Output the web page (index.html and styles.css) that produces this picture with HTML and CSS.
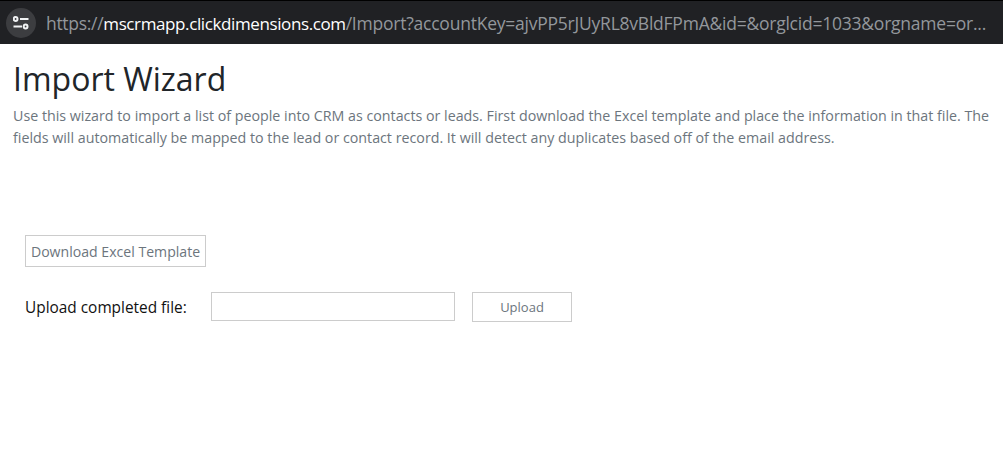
FILE: index.html
```html
<!DOCTYPE html>
<html lang="en">
<head>
<meta charset="utf-8">
<title>Import Wizard</title>
<link rel="stylesheet" href="styles.css">
</head>
<body>
<header class="addressbar">
  <span class="site-btn">
    <svg width="16" height="14" viewBox="0 0 16 14" aria-hidden="true">
      <circle cx="2.6" cy="3" r="1.9" fill="none" stroke="#f1f3f4" stroke-width="2"/>
      <path d="M7 3h8.5M0.5 10.5h8.5" stroke="#f1f3f4" stroke-width="2" fill="none"/>
      <circle cx="12.6" cy="10.5" r="1.9" fill="none" stroke="#f1f3f4" stroke-width="2"/>
    </svg>
  </span>
  <span class="url"><span class="dim">https://</span><span class="host">mscrmapp.clickdimensions.com</span><span class="dim tail">/Import?accountKey=ajvPP5rJUyRL8vBldFPmA&amp;id=&amp;orglcid=1033&amp;orgname=or...</span></span>
</header>
<main class="page">
  <h1 class="title">Import Wizard</h1>
  <p class="intro">Use this wizard to import a list of people into CRM as contacts or leads. First download the Excel template and place the information in that file. The fields will automatically be mapped to the lead or contact record. It will detect any duplicates based off of the email address.</p>
  <section class="actions">
    <button class="download" type="button">Download Excel Template</button>
    <div class="upload-row">
      <label class="upload-label" for="file">Upload completed file:</label>
      <input class="file-input" id="file" type="text">
      <button class="upload" type="button">Upload</button>
    </div>
  </section>
</main>
</body>
</html>
```
FILE: styles.css
```css
* { box-sizing: border-box; }
html, body { margin: 0; padding: 0; background: #fff; }
body { font-family: "Open Sans", "Noto Sans", sans-serif; overflow: hidden; height: 467px; }
.addressbar {
  height: 44px;
  background: #202124;
  border-top: 1px solid #000;
  display: flex;
  align-items: center;
  padding-left: 6px;
  gap: 10px;
}
.site-btn {
  width: 30px; height: 30px; border-radius: 50%;
  background: #3c3d40;
  display: flex; align-items: center; justify-content: center;
  flex: none;
}
.url { font-size: 17.5px; white-space: nowrap; letter-spacing: -0.3px; }
.dim { color: #93979c; }
.tail { letter-spacing: -0.23px; }
.host { color: #fff; font-size: 17px; letter-spacing: -0.39px; }
.page { padding: 13px 13px 0; }
.title { margin: 0; font-size: 32px; line-height: 44px; font-weight: 400; color: #212529; }
.intro { margin: 4px 0 0; font-size: 14.25px; line-height: 22px; color: #6c757d; }
.actions { padding: 86px 0 0 12px; }
.download {
  display: block; width: 181px; height: 32px; padding: 0;
  background: #fff; border: 1px solid #ccc;
  font: 14.1px "Open Sans", sans-serif; color: #6c757d;
}
.upload-row { display: flex; align-items: flex-start; margin-top: 25px; }
.upload-label { width: 186px; padding-top: 1px; font-size: 15.4px; line-height: 30px; color: #111; }
.file-input { width: 244px; height: 29px; border: 1px solid #ccc; background: #fff; }
.upload {
  width: 100px; height: 30px; margin-left: 17px; padding: 0;
  background: #fff; border: 1px solid #ccc;
  font: 13px "Open Sans", sans-serif; color: #6c757d;
}
```
